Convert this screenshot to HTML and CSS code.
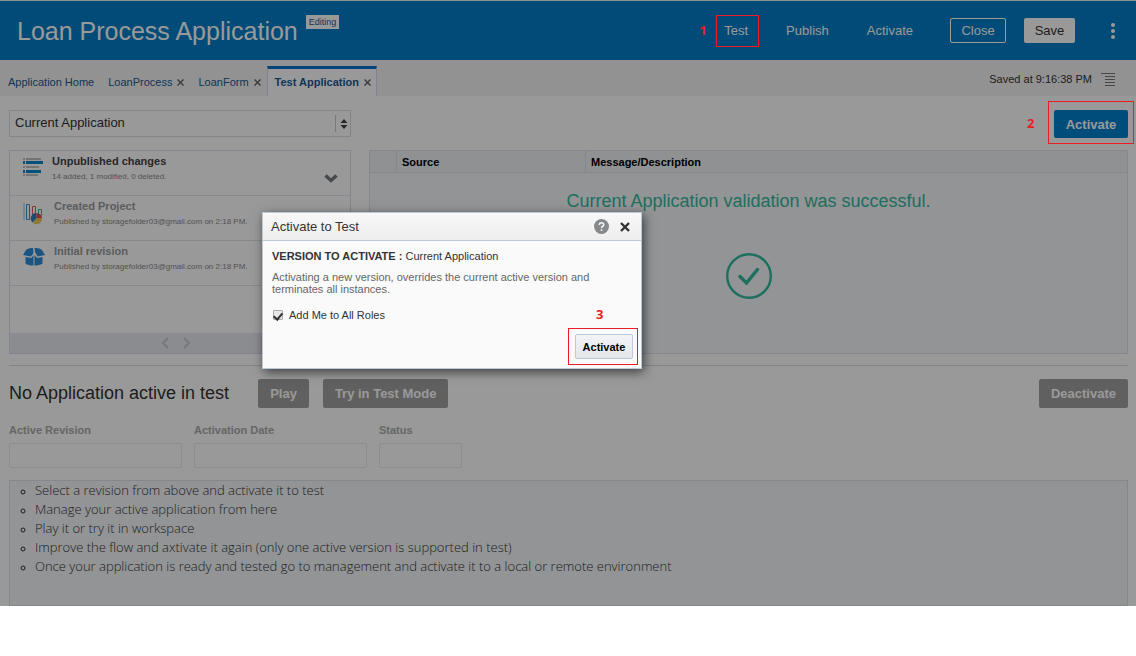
FILE: index.html
```html
<!DOCTYPE html>
<html lang="en">
  <head>
    <meta charset="utf-8" />
    <meta name="viewport" content="width=device-width, initial-scale=1" />
    <title>Loan Process Application</title>
    <link rel="stylesheet" href="styles.css">
  </head>
  <body>
    <div class="app">
      <header class="header">
        <h1 class="header-title">Loan Process Application</h1>
        <span class="badge">Editing</span>
        <nav class="header-nav">
          <div class="step step-test">
            <a href="#test">Test</a>
            <span class="step-number">1</span>
          </div>
          <a class="nav-publish" href="#publish">Publish</a>
          <a class="nav-activate" href="#activate">Activate</a>
          <button class="btn-close" type="button">Close</button>
          <button class="btn-save" type="button">Save</button>
          <button class="btn-more" type="button" aria-label="More">
            <svg width="6" height="16" viewBox="0 0 6 16" fill="#fff">
              <circle cx="3" cy="2" r="2" />
              <circle cx="3" cy="8" r="2" />
              <circle cx="3" cy="14" r="2" />
            </svg>
          </button>
        </nav>
      </header>

      <div class="tabs">
        <a class="tab" href="#home">Application Home</a>
        <div class="tab">
          <a href="#process">LoanProcess</a>
          <button class="tab-close" type="button" aria-label="Close LoanProcess">
            <svg width="7" height="7" viewBox="0 0 7 7"><path d="M.5.5l6 6M6.500.5l-6 6" /></svg>
          </button>
        </div>
        <div class="tab">
          <a href="#form">LoanForm</a>
          <button class="tab-close" type="button" aria-label="Close LoanForm">
            <svg width="7" height="7" viewBox="0 0 7 7"><path d="M.5.5l6 6M6.500.5l-6 6" /></svg>
          </button>
        </div>
        <div class="tab tab-active">
          <a href="#test">Test Application</a>
          <button class="tab-close" type="button" aria-label="Close Test Application">
            <svg width="7" height="7" viewBox="0 0 7 7"><path d="M.5.5l6 6M6.500.5l-6 6" /></svg>
          </button>
        </div>
        <div class="saved">
          <span>Saved at 9:16:38 PM</span>
          <svg width="14" height="13" viewBox="0 0 14 13" stroke="#777" fill="none">
            <path d="M0 .5h14M4 3.500h10M4 6.500h10M4 9.500h10M4 12.500h10" />
          </svg>
        </div>
      </div>

      <main class="content">
        <div class="toolbar">
          <div class="select">
            <select aria-label="Version">
              <option>Current Application</option>
            </select>
            <svg class="select-arrows" width="8" height="10" viewBox="0 0 8 10" fill="#444">
              <path d="M4 0l3.500 4h-7zM4 10l3.500-4h-7z" />
            </svg>
          </div>
          <div class="step step-activate">
            <button class="btn-primary" type="button">Activate</button>
            <span class="step-number">2</span>
          </div>
        </div>

        <div class="panels">
          <section class="revisions">
            <ul class="revision-list">
              <li class="revision revision-current">
                <svg width="20" height="18" viewBox="0 0 20 18">
                  <path d="M0 0h2v2H0zM3 0h15v2H3zM0 8h2v2H0zM3 8h13v2H3zM0 16h2v2H0zM3 16h12v2H3z" fill="#c2c2c2" />
                  <path d="M0 3h2v3H0zM3 3h17v3H3zM0 12h2v3H0zM3 12h15v3H3z" fill="#0b86cf" />
                </svg>
                <div>
                  <h2>Unpublished changes</h2>
                  <p>14 added, 1 modified, 0 deleted.</p>
                </div>
                <svg class="chevron" width="14" height="9" viewBox="0 0 14 9">
                  <path d="M1.500 1.500L7 6.500l5.500-5" fill="none" stroke="#777b80" stroke-width="3.500" />
                </svg>
              </li>
              <li class="revision">
                <svg width="22" height="22" viewBox="0 0 22 22" fill="none">
                  <path d="M1 0v17" stroke="#b8b8b8" />
                  <path d="M3.500 1.500h3v15h-3z" stroke="#3a8fd0" />
                  <path d="M9.500 3.500h3v10h-3z" stroke="#d96060" />
                  <path d="M15.500 6.500h3v6h-3z" stroke="#45b294" />
                  <path d="M13.500 15.500V10a5.500 5.500 0 0 0-4 9.500z" fill="#2d7fc4" />
                  <path d="M13.500 15.500V10a5.500 5.500 0 0 1 5.500 5.500z" fill="#e0504c" />
                  <path d="M13.500 15.500H19a5.500 5.500 0 0 1-9.400 4z" fill="#e8cc55" />
                </svg>
                <div>
                  <h2>Created Project</h2>
                  <p>Published by storagefolder03@gmail.com on 2:18 PM.</p>
                </div>
              </li>
              <li class="revision">
                <svg width="22" height="18" viewBox="0 0 22 18" fill="#2d8bd8">
                  <path d="M3 2c3-2 5-2 7-2l.5 5L8 8.500 0 7zM19 2c-3-2-5-2-7.500-2l.5 4 2.500 4.500L22 7z" />
                  <path d="M2.500 9l6 1L10.500 7v10.500C7 17.500 4.500 17 2.500 15.500zM19.500 9l-5.500 1-2.500-3v10.500c3.500 0 6-.5 8-2z" />
                </svg>
                <div>
                  <h2>Initial revision</h2>
                  <p>Published by storagefolder03@gmail.com on 2:18 PM.</p>
                </div>
              </li>
            </ul>
            <div class="pager">
              <button type="button" aria-label="Previous">
                <svg width="8" height="12" viewBox="0 0 8 12"><path d="M7 1L2 6l5 5" /></svg>
              </button>
              <button type="button" aria-label="Next">
                <svg width="8" height="12" viewBox="0 0 8 12"><path d="M1 1l5 5-5 5" /></svg>
              </button>
            </div>
          </section>

          <table class="messages">
            <thead>
              <tr>
                <th class="col-type"></th>
                <th class="col-source">Source</th>
                <th>Message/Description</th>
              </tr>
            </thead>
            <tbody>
              <tr>
                <td colspan="3">
                  <p>Current Application validation was successful.</p>
                  <svg width="46" height="46" viewBox="0 0 46 46" fill="none" stroke="#34b99e">
                    <circle cx="23" cy="23" r="21.800" stroke-width="2.400" />
                    <path d="M14 23.500l6.500 6.500L31.500 16.500" stroke-width="3.500" stroke-linecap="round" />
                  </svg>
                </td>
              </tr>
            </tbody>
          </table>
        </div>

        <section class="active">
          <div class="active-bar">
            <h2>No Application active in test</h2>
            <button class="btn-gray" type="button">Play</button>
            <button class="btn-gray" type="button">Try in Test Mode</button>
            <button class="btn-gray btn-deactivate" type="button">Deactivate</button>
          </div>
          <div class="fields">
            <div class="field">
              <label for="revision">Active Revision</label>
              <input id="revision" type="text" readonly>
            </div>
            <div class="field">
              <label for="date">Activation Date</label>
              <input id="date" type="text" readonly>
            </div>
            <div class="field field-status">
              <label for="status">Status</label>
              <input id="status" type="text" readonly>
            </div>
          </div>
          <ul class="notes">
            <li>Select a revision from above and activate it to test</li>
            <li>Manage your active application from here</li>
            <li>Play it or try it in workspace</li>
            <li>Improve the flow and axtivate it again (only one active version is supported in test)</li>
            <li>Once your application is ready and tested go to management and activate it to a local or remote environment</li>
          </ul>
        </section>
      </main>

      <div class="overlay"></div>

      <div class="dialog" role="dialog" aria-labelledby="dialog-title">
        <div class="dialog-header">
          <h2 id="dialog-title">Activate to Test</h2>
          <button type="button" aria-label="Help">
            <svg width="15" height="15" viewBox="0 0 15 15">
              <circle cx="7.500" cy="7.500" r="7.500" fill="#85898c" />
              <path d="M5.300 6c0-3 4.400-3 4.400-.3 0 1.600-2.200 1.500-2.200 3.300M7.500 10.200v1.800" fill="none" stroke="#f4f4f4" stroke-width="1.600" />
            </svg>
          </button>
          <button type="button" aria-label="Close">
            <svg width="10" height="10" viewBox="0 0 10 10">
              <path d="M1 1l8 8M9 1L1 9" stroke="#333" stroke-width="2.400" />
            </svg>
          </button>
        </div>
        <div class="dialog-body">
          <p class="version"><b>VERSION TO ACTIVATE :</b> <span>Current Application</span></p>
          <p class="description">Activating a new version, overrides the current active version and terminates all instances.</p>
          <label class="roles"><input type="checkbox" checked> Add Me to All Roles</label>
          <div class="dialog-actions">
            <div class="step step-confirm">
              <button class="btn-confirm" type="button">Activate</button>
              <span class="step-number">3</span>
            </div>
          </div>
        </div>
      </div>
    </div>
  </body>
</html>
```

FILE: styles.css
```css
* {
  box-sizing: border-box;
}

body {
  margin: 0;
  background-color: #fff;
  color: #333;
  font-family: "Liberation Sans", Arial, sans-serif;
  font-size: 11px;
}

h1,
h2,
p,
ul {
  margin: 0;
  padding: 0;
}

a {
  color: inherit;
  text-decoration: none;
}

button,
input,
select {
  font-family: inherit;
}

button {
  padding: 0;
  border: 0;
  background: none;
}

svg {
  display: block;
  flex: none;
}

.app {
  position: relative;
}

.overlay {
  position: absolute;
  inset: 0;
  z-index: 1;
  background-color: rgba(0, 0, 0, 0.4);
}

/* header */
.header {
  display: flex;
  height: 60px;
  padding: 0 20px 0 17px;
  border-top: 1px solid #eee;
  background-color: #007dc8;
  color: #fff;
}

.header-title {
  font-size: 25px;
  font-weight: normal;
  line-height: 60px;
}

.badge {
  align-self: flex-start;
  margin: 14px 0 0 8px;
  padding: 0 3px;
  background-color: #fff;
  color: #1a5a92;
  font-size: 9px;
  line-height: 14px;
}

.header-nav {
  display: flex;
  align-items: center;
  margin-left: auto;
  font-size: 13px;
}

.nav-publish,
.nav-activate {
  margin-left: 38px;
}

.btn-close,
.btn-save {
  height: 25px;
  border-radius: 2px;
  font-size: 13px;
}

.btn-close {
  width: 56px;
  margin-left: 37px;
  border: 1px solid #fff;
  color: #fff;
}

.btn-save {
  width: 51px;
  margin: 0 35px 0 18px;
  background-color: #fff;
  color: #333;
}

/* numbered steps, drawn above the overlay */
.step {
  position: relative;
}

.step::before {
  content: "";
  position: absolute;
  z-index: 2;
  border: 1px solid #ed1c24;
  pointer-events: none;
}

.step-number {
  position: absolute;
  z-index: 2;
  color: #ed1c24;
  font-family: "Open Sans", sans-serif;
  font-size: 13px;
  font-weight: bold;
  line-height: 16px;
}

.step-test::before {
  inset: -8px -11px -9px -8px;
}

.step-test .step-number {
  top: -1px;
  left: -25px;
}

.step-activate {
  margin-left: auto;
}

.step-activate::before {
  inset: -9px -6px -6px -6px;
}

.step-activate .step-number {
  top: 5px;
  left: -27px;
}

.step-confirm::before {
  inset: -6px -5px -6px -7px;
}

.step-confirm .step-number {
  top: -28px;
  left: 21px;
}

/* tabs */
.tabs {
  display: flex;
  align-items: flex-end;
  height: 36px;
  padding-right: 21px;
  background-color: #f3f3f3;
  color: #1a5a92;
}

.tab {
  display: flex;
  align-items: center;
  gap: 5px;
  height: 30px;
  padding: 2px 6px 0 8px;
}

.tab-active {
  padding: 0 5px 1px 7px;
  border: 1px solid #d6dbea;
  border-top: 3px solid #0572ce;
  border-bottom: 0;
  background-color: #fff;
  font-weight: bold;
}

.tab-close svg {
  fill: none;
  stroke: #666;
  stroke-width: 1.5;
}

.saved {
  display: flex;
  align-items: center;
  gap: 9px;
  height: 34px;
  margin-left: auto;
  color: #333;
}

/* content */
.content {
  padding: 14px 8px 0 9px;
}

.toolbar {
  display: flex;
}

.select {
  position: relative;
  width: 342px;
}

.select select {
  width: 100%;
  height: 27px;
  padding: 0 20px 2px 5px;
  border: 1px solid #d6dfe6;
  border-radius: 0;
  background-color: #fff;
  color: #333;
  font-size: 13px;
  appearance: none;
}

.select::after {
  content: "";
  position: absolute;
  top: 5px;
  right: 15px;
  height: 17px;
  border-left: 1px solid #c4ccd8;
}

.select-arrows {
  position: absolute;
  top: 9px;
  right: 3px;
}

.btn-primary {
  width: 74px;
  height: 28px;
  border-radius: 2px;
  background-color: #0081cf;
  color: #fff;
  font-size: 13px;
  font-weight: bold;
}

.panels {
  display: flex;
  gap: 18px;
  height: 204px;
  margin-top: 12px;
}

.revisions {
  display: flex;
  flex: none;
  flex-direction: column;
  width: 342px;
  border: 1px solid #dcdcea;
}

.revision-list {
  flex: 1;
  list-style: none;
}

.revision {
  display: flex;
  gap: 9px;
  height: 45px;
  padding: 4px 13px;
  border-bottom: 1px solid #e4e4ea;
  color: #999;
}

.revision > svg {
  margin-top: 3px;
}

.revision h2 {
  font-size: 11px;
  line-height: 12px;
}

.revision p {
  margin-top: 5px;
  color: #8a8a8a;
  font-size: 8px;
  line-height: 10px;
}

.revision-current h2 {
  color: #444;
}

.revision .chevron {
  align-self: flex-end;
  margin: 0 -1px 8px auto;
}

.pager {
  display: flex;
  align-items: center;
  justify-content: center;
  gap: 14px;
  height: 20px;
  padding-right: 9px;
  background-color: #e8e9f0;
}

.pager svg {
  fill: none;
  stroke: #c6c8cc;
  stroke-width: 2;
}

.messages {
  flex: 1;
  border: 1px solid #dce2ea;
  border-collapse: collapse;
  background-color: #f4f7fa;
  table-layout: fixed;
}

.messages th {
  height: 22px;
  padding: 0 5px;
  border: 1px solid #dce2ea;
  background-color: #eff2f6;
  color: #000;
  text-align: left;
}

.messages .col-type {
  width: 27px;
}

.messages .col-source {
  width: 189px;
}

.messages td {
  padding: 18px 0 0;
  color: #34b99e;
  font-size: 18px;
  line-height: 20px;
  text-align: center;
  vertical-align: top;
}

.messages td svg {
  margin: 42px auto 0;
}

/* active application */
.active {
  margin-top: 11px;
  border-top: 1px solid #ddd;
}

.active-bar {
  display: flex;
  align-items: center;
  padding-top: 13px;
}

.active-bar h2 {
  margin-right: 29px;
  font-size: 18px;
  font-weight: normal;
}

.btn-gray {
  height: 29px;
  margin-right: 14px;
  padding: 0 12px;
  border-radius: 2px;
  background-color: #a0a0a0;
  color: #fff;
  font-size: 13px;
  font-weight: bold;
}

.btn-deactivate {
  margin: 0 0 0 auto;
}

.fields {
  display: flex;
  gap: 12px;
  margin-top: 16px;
}

.field {
  width: 173px;
}

.field label {
  display: block;
  color: #aaa;
  font-weight: bold;
  line-height: 13px;
}

.field input {
  width: 100%;
  height: 25px;
  margin-top: 6px;
  border: 1px solid #ebebeb;
  border-radius: 2px;
  background-color: #fff;
}

.field-status {
  width: 83px;
}

.notes {
  min-height: 126px;
  margin-top: 12px;
  padding: 0 0 0 25px;
  border: 1px solid #dce2ea;
  background-color: #f4f7fa;
  font-family: "Open Sans", sans-serif;
  font-size: 13px;
  font-weight: 300;
  line-height: 19px;
  list-style: circle;
}

.notes li::marker {
  font-size: 10px;
}

/* dialog */
.dialog {
  position: absolute;
  top: 212px;
  left: 262px;
  z-index: 3;
  width: 380px;
  border: 1px solid #b9c9d8;
  background-color: #fafafa;
  box-shadow: 2px 3px 10px rgba(0, 0, 0, 0.6);
}

.dialog-header {
  display: flex;
  align-items: center;
  height: 28px;
  padding: 0 11px 0 8px;
  border-bottom: 1px solid #b9c9d8;
  background: linear-gradient(#f8f8f8, #eee);
}

.dialog-header h2 {
  margin-right: auto;
  font-size: 13px;
  font-weight: normal;
}

.dialog-header button {
  margin-left: 11px;
}

.dialog-body {
  padding: 9px 8px 9px 9px;
}

.version {
  line-height: 13px;
}

.description {
  max-width: 330px;
  margin-top: 8px;
  color: #666;
  line-height: 12px;
}

.roles {
  display: flex;
  align-items: center;
  gap: 6px;
  margin-top: 13px;
  line-height: 14px;
}

.roles input {
  display: flex;
  justify-content: center;
  width: 10px;
  height: 10px;
  margin: 0 0 0 1px;
  border: 1px solid #aaa;
  border-radius: 1px;
  background-color: #e8e8e8;
  appearance: none;
}

.roles input:checked::after {
  content: "";
  width: 4px;
  height: 7px;
  border: solid #333;
  border-width: 0 2px 2px 0;
  transform: rotate(40deg);
}

.dialog-actions {
  display: flex;
  justify-content: flex-end;
  margin-top: 12px;
}

.btn-confirm {
  width: 58px;
  height: 25px;
  border: 1px solid #b9c9d8;
  border-radius: 2px;
  background: linear-gradient(#f2f4f6, #e4e8eb);
  color: #000;
  font-size: 11px;
  font-weight: bold;
}
```
